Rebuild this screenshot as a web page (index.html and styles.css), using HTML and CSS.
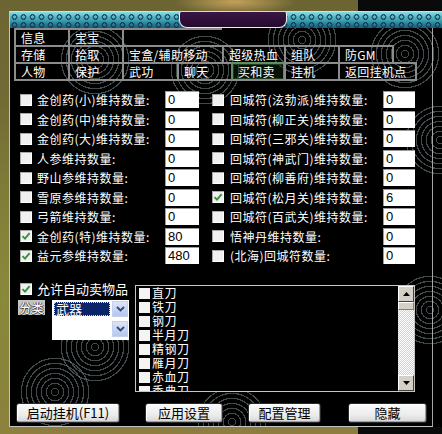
FILE: index.html
```html
<!DOCTYPE html>
<html lang="zh-CN">
<head>
<meta charset="utf-8">
<title>挂机设置</title>
<link rel="stylesheet" href="styles.css">
</head>
<body>
<div class="window">
  <div class="header"><div class="title-tab"></div></div>
  <div class="content">
    <div class="tabs">
      <div class="tab-row">
        <div class="tab w54">信息</div>
        <div class="tab w54">宝宝</div>
        <div class="tab w100 open"></div>
      </div>
      <div class="tab-row">
        <div class="tab w54">存储</div>
        <div class="tab w54">拾取</div>
        <div class="tab w100">宝盒/辅助移动</div>
        <div class="tab w62">超级热血</div>
        <div class="tab w54">组队</div>
        <div class="tab w56 end">防GM</div>
      </div>
      <div class="tab-row last">
        <div class="tab w54">人物</div>
        <div class="tab w54">保护</div>
        <div class="tab w55">武功</div>
        <div class="tab w54">聊天</div>
        <div class="tab w53 sel">买和卖</div>
        <div class="tab w54">挂机</div>
        <div class="tab w79 end">返回挂机点</div>
      </div>
    </div>

    <div class="opts">
      <div class="opt"><span class="cb"></span><span class="lbl">金创药(小)维持数量:</span><input class="num" value="0"></div>
      <div class="opt r"><span class="cb"></span><span class="lbl">回城符(泫勃派)维持数量:</span><input class="num" value="0"></div>

      <div class="opt"><span class="cb"></span><span class="lbl">金创药(中)维持数量:</span><input class="num" value="0"></div>
      <div class="opt r"><span class="cb"></span><span class="lbl">回城符(柳正关)维持数量:</span><input class="num" value="0"></div>

      <div class="opt"><span class="cb"></span><span class="lbl">金创药(大)维持数量:</span><input class="num" value="0"></div>
      <div class="opt r"><span class="cb"></span><span class="lbl">回城符(三邪关)维持数量:</span><input class="num" value="0"></div>

      <div class="opt"><span class="cb"></span><span class="lbl">人参维持数量:</span><input class="num" value="0"></div>
      <div class="opt r"><span class="cb"></span><span class="lbl">回城符(神武门)维持数量:</span><input class="num" value="0"></div>

      <div class="opt"><span class="cb"></span><span class="lbl">野山参维持数量:</span><input class="num" value="0"></div>
      <div class="opt r"><span class="cb"></span><span class="lbl">回城符(柳善府)维持数量:</span><input class="num" value="0"></div>

      <div class="opt"><span class="cb"></span><span class="lbl">雪原参维持数量:</span><input class="num" value="0"></div>
      <div class="opt r"><span class="cb on"><svg viewBox="0 0 12 12"><path d="M2.5 6.2 L5 8.7 L9.6 3.2"/></svg></span><span class="lbl">回城符(松月关)维持数量:</span><input class="num" value="6"></div>

      <div class="opt"><span class="cb"></span><span class="lbl">弓箭维持数量:</span><input class="num" value="0"></div>
      <div class="opt r"><span class="cb"></span><span class="lbl">回城符(百武关)维持数量:</span><input class="num" value="0"></div>

      <div class="opt"><span class="cb on"><svg viewBox="0 0 12 12"><path d="M2.5 6.2 L5 8.7 L9.6 3.2"/></svg></span><span class="lbl">金创药(特)维持数量:</span><input class="num" value="80"></div>
      <div class="opt r"><span class="cb"></span><span class="lbl">悟神丹维持数量:</span><input class="num" value="0"></div>

      <div class="opt"><span class="cb on"><svg viewBox="0 0 12 12"><path d="M2.5 6.2 L5 8.7 L9.6 3.2"/></svg></span><span class="lbl">益元参维持数量:</span><input class="num" value="480"></div>
      <div class="opt r"><span class="cb"></span><span class="lbl">(北海)回城符数量:</span><input class="num" value="0"></div>
    </div>

    <div class="lower">
      <div class="sell">
        <div class="sell-head"><span class="cb on"><svg viewBox="0 0 12 12"><path d="M2.5 6.2 L5 8.7 L9.6 3.2"/></svg></span><span class="lbl">允许自动卖物品</span></div>
        <div class="cat">
          <span class="cat-label">分类</span>
          <div class="select">
            <span class="val">武器</span>
            <span class="arrow"><svg width="9" height="6" viewBox="0 0 9 6"><path d="M1 1 L4.5 4.5 L8 1"/></svg></span>
          </div>
        </div>
        <div class="select select2">
          <span class="val empty"></span>
          <span class="arrow"><svg width="9" height="6" viewBox="0 0 9 6"><path d="M1 1 L4.5 4.5 L8 1"/></svg></span>
        </div>
      </div>
      <div class="list">
        <div class="items">
          <div class="item"><span class="cb"></span><span>直刀</span></div>
          <div class="item"><span class="cb"></span><span>铁刀</span></div>
          <div class="item"><span class="cb"></span><span>钢刀</span></div>
          <div class="item"><span class="cb"></span><span>半月刀</span></div>
          <div class="item"><span class="cb"></span><span>精钢刀</span></div>
          <div class="item"><span class="cb"></span><span>雁月刀</span></div>
          <div class="item"><span class="cb"></span><span>赤血刀</span></div>
          <div class="item"><span class="cb"></span><span>秀典刀</span></div>
        </div>
        <div class="sb">
          <span class="sb-btn"><svg width="7" height="4" viewBox="0 0 7 4"><path d="M3.5 0 L7 4 H0 Z"/></svg></span>
          <span class="sb-thumb"></span>
          <span class="sb-track"></span>
          <span class="sb-btn"><svg width="7" height="4" viewBox="0 0 7 4"><path d="M0 0 H7 L3.5 4 Z"/></svg></span>
        </div>
      </div>
    </div>

    <div class="buttons">
      <button class="btn b1">启动挂机(F11)</button>
      <button class="btn b2">应用设置</button>
      <button class="btn b3">配置管理</button>
      <button class="btn b4">隐藏</button>
    </div>
  </div>
</div>
</body>
</html>
```

FILE: styles.css
```css
* { box-sizing: border-box; }

html, body { margin: 0; padding: 0; }

body {
  width: 442px;
  height: 434px;
  overflow: hidden;
  padding: 11px 0 0 9px;
  font-family: "Noto Sans CJK SC", "Noto Sans", sans-serif;
  background:
    linear-gradient(90deg, transparent 358px, #0a0a0a 358px),
    radial-gradient(ellipse 60px 12px at 235px 2px, #c4a15a 0, transparent 100%),
    radial-gradient(ellipse 30px 200px at 3px 300px, #8a8a3a 0, transparent 100%),
    linear-gradient(180deg, #6c6533 0%, #767038 45%, #8d7d3f 100%);
}

.window {
  --ring: rgba(130, 148, 148, 0.5);
  --rings: transparent 0 3px, var(--ring) 3px 4.3px, transparent 4.3px 8px,
    var(--ring) 8px 9.3px, transparent 9.3px 13px, var(--ring) 13px 14.3px,
    transparent 14.3px 18px, var(--ring) 18px 19.3px, transparent 19.3px 23px,
    var(--ring) 23px 24.3px, transparent 24.3px 28px, var(--ring) 28px 29.3px,
    transparent 29.3px 33px, var(--ring) 33px 34.3px, transparent 34.3px;
  width: 433px;
  height: 416px;
  display: flex;
  flex-direction: column;
  border-left: 1px solid #c4c4c4;
  border-top: 1px solid #dadada;
  background:
    radial-gradient(circle at 85px 48px, var(--rings)),
    radial-gradient(circle at 195px 58px, var(--rings)),
    radial-gradient(circle at 292px 28px, var(--rings)),
    radial-gradient(circle at 395px 42px, var(--rings)),
    radial-gradient(circle at 430px 128px, var(--rings)),
    radial-gradient(circle at 420px 298px, var(--rings)),
    radial-gradient(circle at 45px 380px, var(--rings)),
    radial-gradient(circle at 85px 335px, var(--rings)),
    radial-gradient(circle at 222px 410px, var(--rings)),
    #000;
}

/* ---------- header band ---------- */
.header {
  height: 16px;
  flex: none;
  display: flex;
  background:
    radial-gradient(circle, transparent 0 1.4px, rgba(18, 48, 92, 0.75) 1.8px 2.8px, transparent 3.2px) 0 1px / 9px 8px,
    linear-gradient(180deg, #8adde2 0%, #4db4be 35%, #2a8796 70%, #1b5c72 100%);
}

.title-tab {
  margin-left: 169px;
  width: 108px;
  height: 16px;
  background: linear-gradient(180deg, #3a1646, #250b2e);
  border: 1px solid #ececec;
  border-top: none;
  border-radius: 2px 2px 8px 8px;
}

/* ---------- content ---------- */
.content {
  flex: 1;
  width: 423px;
  border-right: 1px solid #a6a6a6;
  border-bottom: 1px solid #c4c4c4;
}

/* ---------- tabs ---------- */
.tabs { margin-left: 4px; }

.tab-row {
  display: flex;
  height: 17px;
}
.tab-row.last { height: 19px; }

.tab {
  height: 100%;
  border-left: 2px solid #8c8c8c;
  border-top: 2px solid #8c8c8c;
  color: #fff;
  font-size: 12px;
  line-height: 15px;
  padding-left: 5px;
  letter-spacing: 0.3px;
  white-space: nowrap;
  overflow: hidden;
}
.tab-row.last .tab { border-bottom: 2px solid #8c8c8c; }
.tab.end { border-right: 2px solid #8c8c8c; }
.tab.sel {
  border-color: #5f8f5f;
  box-shadow: inset -1px 0 0 #5f8f5f, inset 0 0 0 1px #203a20;
  background: rgba(20, 50, 20, 0.35);
}

.w53 { width: 53px; }
.w54 { width: 54px; }
.w55 { width: 55px; }
.w56 { width: 56px; }
.w62 { width: 62px; }
.w79 { width: 79px; }
.w100 { width: 100px; }

/* ---------- option grid ---------- */
.opts {
  display: grid;
  grid-template-columns: 192px 203px;
  grid-auto-rows: 17px;
  row-gap: 2.5px;
  margin: 10px 0 0 10px;
}

.opt {
  display: flex;
  align-items: center;
}

.cb {
  flex: none;
  width: 12px;
  height: 12px;
  background: #f0f0f0;
  box-shadow: inset 1px 1px 0 #a9a9a9, inset -1px -1px 0 #ffffff;
  display: flex;
  align-items: center;
  justify-content: center;
}
.cb svg { width: 12px; height: 12px; }
.cb svg path {
  fill: none;
  stroke: #3a8f3a;
  stroke-width: 1.9;
}

.opt .lbl {
  margin-left: 5px;
  width: 128px;
  color: #fff;
  font-size: 12px;
  letter-spacing: 0.5px;
  line-height: 17px;
  white-space: nowrap;
}

.num {
  width: 34px;
  height: 17px;
  border: 0;
  margin: 0;
  padding: 0 0 0 3px;
  background: #fff;
  color: #000;
  font: 13px/17px "Liberation Sans", Arial, sans-serif;
  box-shadow: inset 1px 1px 0 #9c9c9c;
  outline: none;
}

.opt.r .lbl { margin-left: 6px; width: 153px; }
.opt.r .num { width: 32px; }

/* ---------- lower area ---------- */
.lower {
  display: flex;
  margin-top: 19px;
}

.sell {
  margin-left: 8px;
  width: 111px;
}

.sell-head {
  display: flex;
  align-items: center;
  height: 12px;
  margin-left: 2px;
}
.sell-head .lbl {
  margin-left: 5px;
  color: #fff;
  font-size: 13px;
  line-height: 12px;
  white-space: nowrap;
}

.cat {
  display: flex;
  margin-top: 5px;
}

.cat-label {
  width: 27px;
  height: 15px;
  background: #c4c4c4;
  color: #ffffff;
  font-size: 12px;
  line-height: 15px;
  text-align: center;
  text-shadow: 1px 0 0 #3a3a3a, 0 1px 0 #3a3a3a, -1px 0 0 #6a6a6a;
}

.select {
  margin-left: 7px;
  width: 77px;
  height: 18px;
  background: #fff;
  display: flex;
  align-items: center;
  padding: 1px 1px 1px 2px;
}
.select .val {
  flex: 1;
  height: 14px;
  background: #0a246a;
  color: #fff;
  font-size: 13px;
  line-height: 14px;
  padding-left: 2px;
  outline: 1px dotted #e0e0e0;
  outline-offset: -1px;
}
.select .val.empty {
  background: transparent;
  outline: none;
}
.select .arrow {
  flex: none;
  width: 16px;
  height: 16px;
  margin-left: 2px;
  background: linear-gradient(180deg, #dbe4f8, #b5c7ee);
  border: 1px solid #c4d2f0;
  display: flex;
  align-items: center;
  justify-content: center;
}
.select .arrow path {
  fill: none;
  stroke: #33477f;
  stroke-width: 1.8;
}
.select2 {
  margin-left: 34px;
  height: 22px;
}

/* ---------- list box ---------- */
.list {
  margin: 2px 0 0 6px;
  width: 280px;
  height: 107px;
  border: 1px solid #c6c6c6;
  background: #000;
  display: flex;
  overflow: hidden;
}

.items {
  flex: 1;
  padding-left: 3px;
  overflow: hidden;
}

.item {
  display: flex;
  align-items: center;
  height: 14px;
  color: #fff;
  font-size: 12px;
  letter-spacing: 0.5px;
  line-height: 14px;
  white-space: nowrap;
}
.item .cb {
  width: 11px;
  height: 11px;
  margin-right: 2px;
  background: #f4f4f4;
  box-shadow: none;
}

.sb {
  flex: none;
  width: 16px;
  display: flex;
  flex-direction: column;
  background: repeating-conic-gradient(#d4d0c8 0 25%, #ffffff 0 50%) 0 0 / 2px 2px;
}
.sb-btn {
  flex: none;
  height: 16px;
  background: #d4d0c8;
  border: 1px solid;
  border-color: #ffffff #404040 #404040 #ffffff;
  display: flex;
  align-items: center;
  justify-content: center;
}
.sb-btn path { fill: #000; }
.sb-thumb {
  flex: none;
  height: 8px;
  background: #d4d0c8;
  border: 1px solid;
  border-color: #ffffff #808080 #808080 #ffffff;
}
.sb-track { flex: 1; }

/* ---------- buttons ---------- */
.buttons {
  display: flex;
  margin: 11px 0 0 6px;
}

.btn {
  height: 20px;
  padding: 0;
  margin: 0;
  border: 1px solid #2a2a2a;
  border-radius: 3px;
  background: linear-gradient(180deg, #fbfbfb 0%, #ececec 60%, #d6d6d6 100%);
  box-shadow: inset 1px 1px 0 #ffffff, inset -1px -1px 0 #a0a0a0;
  color: #000;
  font-family: "Noto Sans CJK SC", "Noto Sans", sans-serif;
  font-size: 13px;
  line-height: 18px;
  text-align: center;
  white-space: nowrap;
}
.b1 { width: 104px; }
.b2 { width: 78px; margin-left: 25px; }
.b3 { width: 73px; margin-left: 25px; }
.b4 { width: 79px; margin-left: 27px; }
```
